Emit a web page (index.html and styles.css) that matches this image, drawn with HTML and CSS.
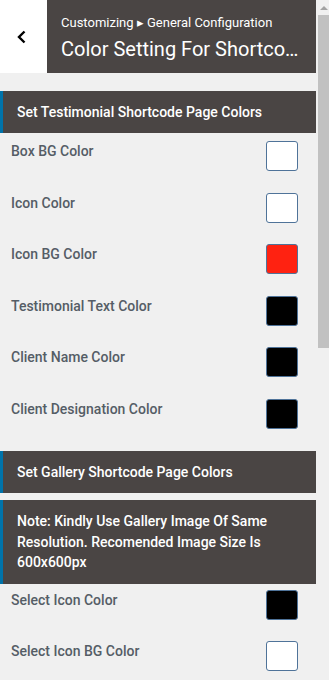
FILE: index.html
```html
<!DOCTYPE html>
<html>
<head>
  <title>Color Setting For Shortcode</title>
  <link rel="stylesheet" href="styles.css">
</head>
<body>
  <div class="frame">
    <div class="panel">
      <div class="header">
        <div class="back">
          <svg width="12" height="14" viewBox="0 0 12 14"><path d="M8.5 1.5 L3 7 L8.5 12.5" fill="none" stroke="#000" stroke-width="2.4"/></svg>
        </div>
        <div class="titles">
          <div class="crumb">Customizing &#9656; General Configuration</div>
          <div class="title">Color Setting For Shortcode Pages</div>
        </div>
      </div>

      <div class="section first">Set Testimonial Shortcode Page Colors</div>
      <div class="rows">
        <div class="row"><span>Box BG Color</span><span class="swatch white"></span></div>
        <div class="row"><span>Icon Color</span><span class="swatch white"></span></div>
        <div class="row"><span>Icon BG Color</span><span class="swatch red"></span></div>
        <div class="row"><span>Testimonial Text Color</span><span class="swatch black"></span></div>
        <div class="row"><span>Client Name Color</span><span class="swatch black"></span></div>
        <div class="row"><span>Client Designation Color</span><span class="swatch black"></span></div>
      </div>

      <div class="section">Set Gallery Shortcode Page Colors</div>
      <div class="section note">Note: Kindly Use Gallery Image Of Same Resolution. Recomended Image Size Is 600x600px</div>
      <div class="rows tight">
        <div class="row"><span>Select Icon Color</span><span class="swatch black"></span></div>
        <div class="row"><span>Select Icon BG Color</span><span class="swatch white"></span></div>
      </div>
    </div>

    <div class="scrollbar">
      <div class="arrow"></div>
      <div class="thumb"></div>
    </div>
  </div>
</body>
</html>
```

FILE: styles.css
```css
body {
  margin: 0;
  font-family: Roboto, "Liberation Sans", sans-serif;
  background: #f0f0f0;
}

.frame {
  display: flex;
  height: 680px;
  overflow: hidden;
}

.panel {
  width: 316px;
  flex: none;
}

.header {
  display: flex;
  height: 73px;
  margin-bottom: 18px;
}

.back {
  width: 47px;
  background: white;
  display: flex;
  align-items: center;
  justify-content: center;
  padding-right: 3px;
  box-sizing: border-box;
}

.titles {
  flex: 1;
  min-width: 0;
  background: #4a4544;
  color: white;
  padding: 15px 14px 0 14px;
}

.crumb {
  font-size: 13px;
  line-height: 16px;
}

.title {
  font-size: 20px;
  line-height: 26px;
  margin-top: 5px;
  white-space: nowrap;
  overflow: hidden;
  text-overflow: ellipsis;
}

.section {
  background: #4a4544;
  color: white;
  border-left: 3px solid #0073aa;
  font-size: 14px;
  font-weight: 500;
  line-height: 20px;
  padding: 11px 14px 11px 14px;
}

.note {
  margin-top: 7px;
  line-height: 20.5px;
  padding: 11px 14px 11px 14px;
}

.rows {
  padding-top: 8px;
  padding-bottom: 1px;
}

.rows.tight {
  padding-top: 6px;
}

.row {
  display: flex;
  justify-content: space-between;
  align-items: flex-start;
  height: 51.5px;
  padding: 0 18px 0 11px;
  font-size: 14px;
  font-weight: 500;
  line-height: 20px;
  color: #555d66;
}

.swatch {
  width: 30px;
  height: 28px;
  border: 1px solid #4f7399;
  border-radius: 3px;
}

.white { background: white; }
.red { background: #ff2211; }
.black { background: #000; }

.scrollbar {
  flex: 1;
  display: flex;
  flex-direction: column;
  align-items: flex-end;
}

.arrow {
  width: 11px;
  height: 15px;
  position: relative;
}

.arrow::after {
  content: "";
  position: absolute;
  left: 2px;
  top: 6px;
  border-left: 4px solid transparent;
  border-right: 4px solid transparent;
  border-bottom: 4px solid #a3a3a3;
}

.thumb {
  width: 11px;
  height: 333px;
  background: #c1c1c1;
}
```
